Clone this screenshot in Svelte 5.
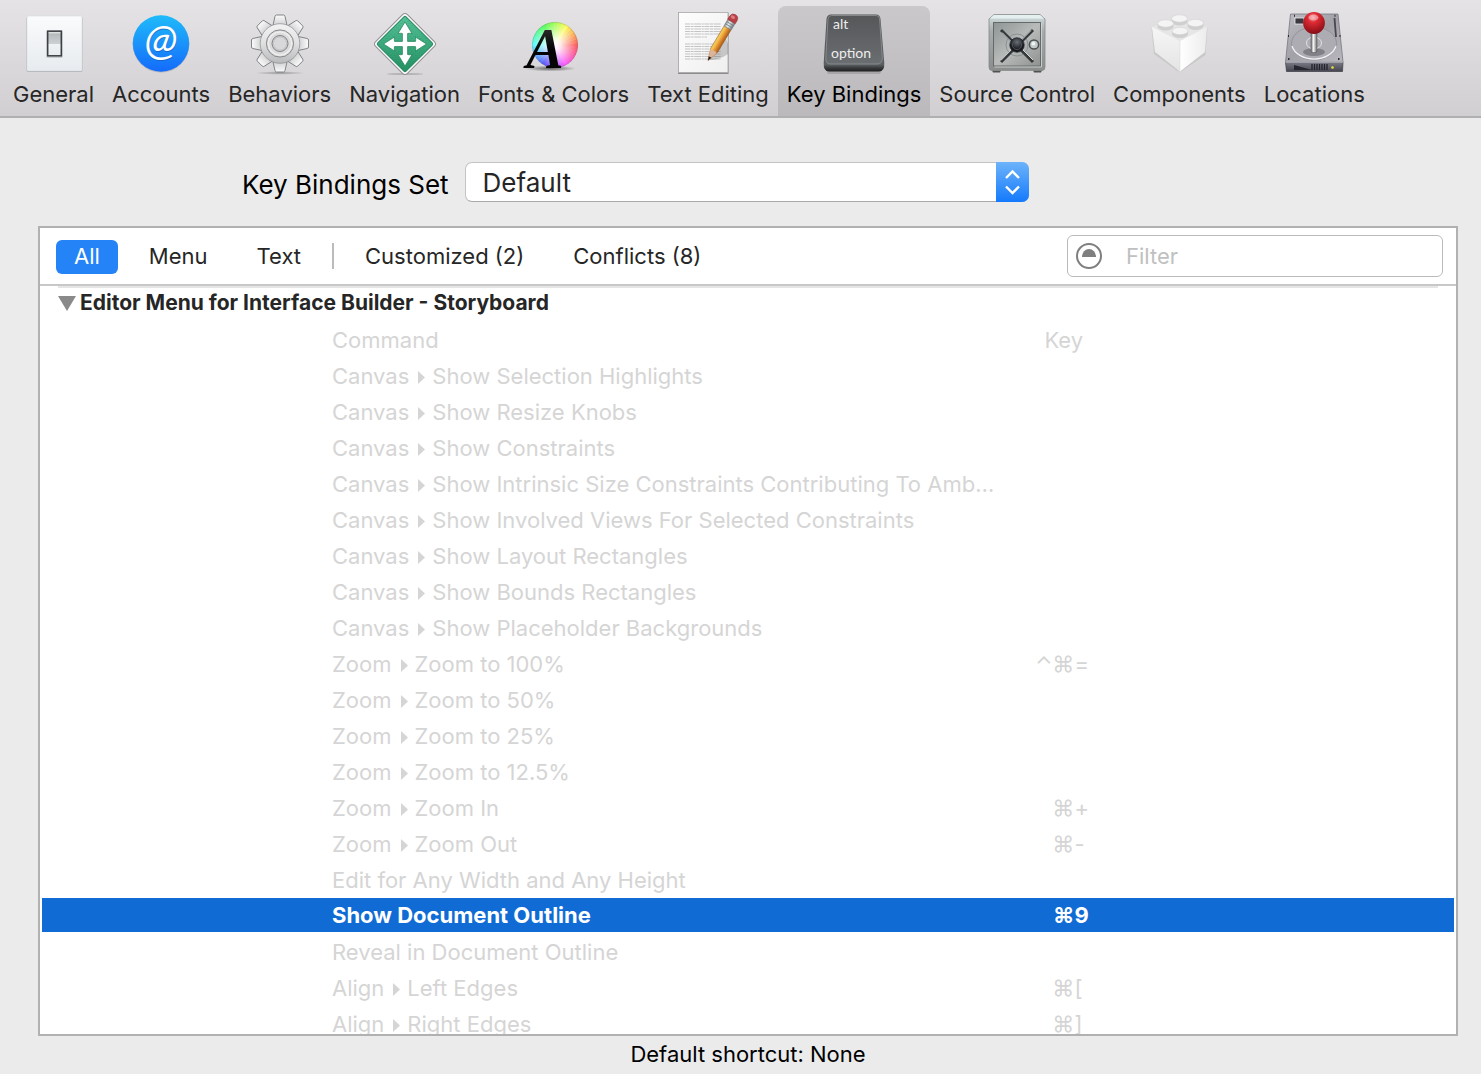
<script lang="ts">
	interface Tab {
		id: string;
		label: string;
	}

	interface Binding {
		path: string[];
		mods?: string;
		key?: string;
	}

	const tabs: Tab[] = [
		{ id: 'general', label: 'General' },
		{ id: 'accounts', label: 'Accounts' },
		{ id: 'behaviors', label: 'Behaviors' },
		{ id: 'navigation', label: 'Navigation' },
		{ id: 'fonts', label: 'Fonts & Colors' },
		{ id: 'text', label: 'Text Editing' },
		{ id: 'keys', label: 'Key Bindings' },
		{ id: 'source', label: 'Source Control' },
		{ id: 'components', label: 'Components' },
		{ id: 'locations', label: 'Locations' }
	];

	const bindings: Binding[] = [
		{ path: ['Canvas', 'Show Selection Highlights'] },
		{ path: ['Canvas', 'Show Resize Knobs'] },
		{ path: ['Canvas', 'Show Constraints'] },
		{ path: ['Canvas', 'Show Intrinsic Size Constraints Contributing To Amb…'] },
		{ path: ['Canvas', 'Show Involved Views For Selected Constraints'] },
		{ path: ['Canvas', 'Show Layout Rectangles'] },
		{ path: ['Canvas', 'Show Bounds Rectangles'] },
		{ path: ['Canvas', 'Show Placeholder Backgrounds'] },
		{ path: ['Zoom', 'Zoom to 100%'], mods: '⌃⌘', key: '=' },
		{ path: ['Zoom', 'Zoom to 50%'] },
		{ path: ['Zoom', 'Zoom to 25%'] },
		{ path: ['Zoom', 'Zoom to 12.5%'] },
		{ path: ['Zoom', 'Zoom In'], mods: '⌘', key: '+' },
		{ path: ['Zoom', 'Zoom Out'], mods: '⌘', key: '-' },
		{ path: ['Edit for Any Width and Any Height'] },
		{ path: ['Show Document Outline'], mods: '⌘', key: '9' },
		{ path: ['Reveal in Document Outline'] },
		{ path: ['Align', 'Left Edges'], mods: '⌘', key: '[' },
		{ path: ['Align', 'Right Edges'], mods: '⌘', key: ']' }
	];

	const filters = ['All', 'Menu', 'Text'];
	const states = ['Customized (2)', 'Conflicts (8)'];

	let activeTab = $state('keys');
	let activeFilter = $state('All');
	let selected = $state(15);
	let open = $state(true);

	// gear teeth, every 45 degrees
	const teeth = [0, 45, 90, 135, 180, 225, 270, 315];

	// colour wheel slices, 10 degrees each, counter-clockwise from red
	const slices = Array.from({ length: 36 }, (_, i) => {
		const a = ((i * 10 - 6) * Math.PI) / 180;
		const b = ((i * 10 + 6) * Math.PI) / 180;
		const pt = (t: number) => `${(33 + 23 * Math.cos(t)).toFixed(2)} ${(35 - 23 * Math.sin(t)).toFixed(2)}`;
		return { d: `M33 35 L${pt(a)} L${pt(b)} Z`, fill: `hsl(${i * 10} 95% 65%)` };
	});

	const lines = [14, 16.5, 19, 21.5, 24, 27, 34, 36.5, 39, 41.5, 44, 46.5, 49];
</script>

<div class="window">
	<nav class="toolbar" aria-label="Preferences">
		{#each tabs as tab (tab.id)}
			<button class="tab" class:active={activeTab === tab.id} onclick={() => (activeTab = tab.id)}>
				<svg viewBox="0 0 64 64" aria-hidden="true">
					{#if tab.id === 'general'}
						<defs>
							<linearGradient id="plate" x2="0" y2="1"><stop stop-color="#fafbfc" /><stop offset="1" stop-color="#e7ebef" /></linearGradient>
							<linearGradient id="rocker" x2="0" y2="1"><stop stop-color="#fafafa" /><stop offset=".12" stop-color="#b8bbbe" /><stop offset=".5" stop-color="#cdd0d3" /><stop offset=".52" stop-color="#f0f3f5" /><stop offset="1" stop-color="#e6eaed" /></linearGradient>
						</defs>
						<rect x="4.5" y="6.5" width="56" height="55.5" rx="2" fill="#a9adb0" />
						<rect x="5" y="6" width="55" height="55" rx="1.5" fill="url(#plate)" stroke="#d9dde0" stroke-width=".6" />
						<rect x="24" y="20" width="17" height="28" rx="2" fill="#9da1a5" opacity=".45" />
						<rect x="25.7" y="21.2" width="13.6" height="24.6" fill="url(#rocker)" stroke="#3c3f43" stroke-width="1.5" />
					{:else if tab.id === 'accounts'}
						<defs>
							<linearGradient id="blue" x2="0" y2="1"><stop stop-color="#1fbbfa" /><stop offset="1" stop-color="#146bfb" /></linearGradient>
						</defs>
						<circle cx="32" cy="34.2" r="28.4" fill="#7a8797" opacity=".4" />
						<circle cx="32" cy="33.5" r="28.2" fill="url(#blue)" />
						<text class="at shade" x="32.5" y="46" text-anchor="middle">@</text>
						<text class="at" x="32" y="45" text-anchor="middle">@</text>
					{:else if tab.id === 'behaviors'}
						<defs>
							<linearGradient id="gear" x2="0" y2="1"><stop stop-color="#f3f3f3" /><stop offset=".5" stop-color="#e0e0e1" /><stop offset="1" stop-color="#b9babc" /></linearGradient>
							<linearGradient id="tooth" x2="0" y2="1"><stop stop-color="#fbfbfb" /><stop offset="1" stop-color="#c9cacc" /></linearGradient>
							<radialGradient id="floor"><stop stop-color="#77787a" stop-opacity=".7" /><stop offset="1" stop-color="#77787a" stop-opacity="0" /></radialGradient>
						</defs>
						<ellipse cx="32" cy="63" rx="25" ry="1.8" fill="url(#floor)" />
						{#each teeth as angle (angle)}
							<path transform="rotate({angle} 32 33.5)" d="M24.6 17 L27 6.4 Q27.3 5 28.5 5 H35.5 Q36.7 5 37 6.4 L39.4 17 Z" fill="url(#tooth)" stroke="#77797d" stroke-width=".9" />
						{/each}
						<circle cx="32" cy="33.5" r="19.8" fill="url(#gear)" stroke="#8b8d90" stroke-width=".7" />
						<circle cx="32" cy="33.5" r="13.6" fill="#dcdcdd" stroke="#85878b" stroke-width="1" />
						<circle cx="32" cy="33.5" r="11.5" fill="none" stroke="#eeeeee" stroke-width="1.4" />
						<circle cx="32" cy="33.5" r="8" fill="#d2d1d3" stroke="#808286" stroke-width="1" />
						<circle cx="32" cy="33.5" r="6.6" fill="#d8d7d9" stroke="#b3b4b7" stroke-width=".6" />
					{:else if tab.id === 'navigation'}
						<defs>
							<linearGradient id="green" x2="1" y2="1"><stop stop-color="#57c39a" /><stop offset="1" stop-color="#239163" /></linearGradient>
							<pattern id="grain" width="3" height="3" patternUnits="userSpaceOnUse"><path d="M0 0h1v1h-1zM2 1h1v1h-1z" fill="#16764c" opacity=".25" /></pattern>
						</defs>
						<ellipse cx="32" cy="64" rx="18" ry="1" fill="#8d8d8f" opacity=".5" />
						<rect x="9.5" y="11.500" width="45" height="45" rx="3.5" transform="rotate(45 32 34)" fill="#fcfcfc" stroke="#8e8e90" stroke-width="1" />
						<rect x="12" y="14" width="40" height="40" rx="1.5" transform="rotate(45 32 34)" fill="url(#green)" stroke="#258a60" stroke-width="1" />
						<rect x="13" y="15" width="38" height="38" transform="rotate(45 32 34)" fill="url(#grain)" />
						<path d="M32 12 L39 23.5 Q36.5 23 34.6 23.5 V31.4 H42.5 Q43 29.5 42.5 27 L53.5 34 L42.5 41 Q43 38.5 42.5 36.6 H34.6 V44.5 Q36.5 45 39 44.5 L32 56 L25 44.5 Q27.5 45 29.4 44.5 V36.6 H21.5 Q21 38.5 21.5 41 L10.5 34 L21.5 27 Q21 29.5 21.5 31.4 H29.4 V23.5 Q27.5 23 25 23.5 Z" fill="#fff" stroke="#1e8054" stroke-width=".7" />
					{:else if tab.id === 'fonts'}
						<defs>
							<radialGradient id="white"><stop stop-color="#fff" /><stop offset=".25" stop-color="#fff" stop-opacity=".85" /><stop offset="1" stop-color="#fff" stop-opacity="0" /></radialGradient>
							<radialGradient id="under"><stop stop-color="#333" stop-opacity=".7" /><stop offset="1" stop-color="#333" stop-opacity="0" /></radialGradient>
							<linearGradient id="ink" x2="0" y2="1"><stop stop-color="#3c3c3c" /><stop offset=".5" stop-color="#050505" /></linearGradient>
						</defs>
						<ellipse cx="28" cy="58.5" rx="26" ry="3" fill="url(#under)" />
						{#each slices as slice (slice.d)}
							<path d={slice.d} fill={slice.fill} />
						{/each}
						<circle cx="33" cy="35" r="23" fill="url(#white)" />
						<circle cx="33" cy="35" r="22.6" fill="none" stroke="#777" stroke-opacity=".35" stroke-width=".8" />
						<text class="letter" x="23" y="58" text-anchor="middle" fill="url(#ink)">A</text>
					{:else if tab.id === 'text'}
						<defs>
							<linearGradient id="paper" x2="1" y2="1"><stop stop-color="#fdfdfd" /><stop offset="1" stop-color="#efefef" /></linearGradient>
							<linearGradient id="wood"><stop stop-color="#f7d56a" /><stop offset=".35" stop-color="#f0b344" /><stop offset=".6" stop-color="#e08a2c" /><stop offset="1" stop-color="#a6591c" /></linearGradient>
							<linearGradient id="metal"><stop stop-color="#8f9ba0" /><stop offset=".4" stop-color="#e4eaec" /><stop offset="1" stop-color="#6f797d" /></linearGradient>
						</defs>
						<rect x="2" y="3" width="50.5" height="61" fill="#8c8c8c" />
						<rect x="2.4" y="2.5" width="49.6" height="60" fill="url(#paper)" stroke="#a8a8a8" stroke-width=".8" />
						{#each lines as y (y)}
							<path d="M9 {y} H{y === 27 ? 31 : 45}" stroke="#c4c4c4" stroke-width="1.2" stroke-dasharray="5 .6 3 .6 7 .6 2 .6" />
						{/each}
						<path d="M32 50 L50 28 L52 34 L52 44 Q44 50 32 50 Z" fill="#555" opacity=".28" />
						<g transform="translate(32 50.5) rotate(31)">
							<path d="M0 0 L-4 -12 V-38 H4 V-12 Z" fill="url(#wood)" stroke="#8d541d" stroke-width=".5" />
							<path d="M0 0 L-4 -12 Q-2.3 -10 -1.2 -12 Q0 -10 1.5 -12 Q3 -10 4 -12 Z" fill="#ddb39a" />
							<path d="M0 0 L-1.5 -4 H1.5 Z" fill="#1d1d1d" />
							<rect x="-4.2" y="-45.5" width="8.4" height="7.5" fill="url(#metal)" stroke="#757f83" stroke-width=".5" />
							<path d="M-4.2 -43 H4.2 M-4.2 -40.5 H4.2" stroke="#6e787c" stroke-width=".7" />
							<path d="M-4.4 -45.5 V-49 Q-4 -53.5 0 -53.5 Q4 -53.5 4.4 -49 V-45.5 Z" fill="#b93f45" stroke="#8d2e33" stroke-width=".5" />
							<ellipse cx="-1" cy="-50" rx="2.3" ry="1.6" fill="#df7a7c" />
						</g>
					{:else if tab.id === 'keys'}
						<defs>
							<linearGradient id="cap" x2="0" y2="1"><stop stop-color="#555759" /><stop offset="1" stop-color="#6b6e71" /></linearGradient>
							<linearGradient id="side" x2="0" y2="1"><stop stop-color="#55585a" /><stop offset=".88" stop-color="#5d6062" /><stop offset=".94" stop-color="#36383a" /><stop offset="1" stop-color="#1e1f20" /></linearGradient>
						</defs>
						<path d="M4 60 H60 L58 64 H6 Z" fill="#777" opacity=".35" />
						<path d="M9 4.5 H54 Q58 4.5 58.5 9 L62.3 53 Q62.7 61.5 57 61.5 H7 Q1.3 61.5 1.7 53 L4.500 9 Q5 4.5 9 4.5 Z" fill="url(#side)" />
						<path d="M9.5 5.5 H54 Q57.3 5.5 57.6 9 L60.3 48 Q60.5 54 55 54 H8 Q3.5 54 3.8 48 L6 9 Q6.4 5.5 9.5 5.5 Z" fill="url(#cap)" stroke="#898c8f" stroke-width=".9" />
						<text class="cap" x="11" y="19">alt</text>
						<text class="cap" x="9" y="48">option</text>
					{:else if tab.id === 'source'}
						<defs>
							<linearGradient id="safe" x2="0" y2="1"><stop stop-color="#d5e1e1" /><stop offset=".3" stop-color="#a7acac" /><stop offset="1" stop-color="#8b8d8c" /></linearGradient>
							<linearGradient id="door" x2="1" y2="1"><stop stop-color="#8d9594" /><stop offset=".5" stop-color="#b8bbba" /><stop offset="1" stop-color="#8f9190" /></linearGradient>
							<radialGradient id="hub" cy=".3"><stop stop-color="#6b7078" /><stop offset="1" stop-color="#17191d" /></radialGradient>
						</defs>
						<path d="M6 58 H17 L15 62.5 H8 Z M47 58 H58 L56 62.5 H49 Z" fill="#4f5252" />
						<path d="M9 4.5 H55 L60 9 V57 Q60 60.5 57 60.5 H7 Q4 60.5 4 57 V9 Z" fill="url(#safe)" stroke="#868c8b" stroke-width=".8" />
						<path d="M9 5 H55 L59 8.5 H5 Z" fill="#e4f0f0" />
						<rect x="8.5" y="12.5" width="47" height="43.5" fill="url(#door)" stroke="#646a69" stroke-width="1" />
						<path d="M9.5 57 H56.5 V13" fill="none" stroke="#d3d9d8" stroke-width=".8" />
						<circle cx="32" cy="35" r="11" fill="none" stroke="#8a9294" stroke-width="1" />
						<path d="M16 20 L48 52 M48 20 L16 52" stroke="#34383a" stroke-width="3" />
						<path d="M17 22.5 L30 35.5 M46 20.5 L34 32.5 M29 37 L15.8 50.5 M35 37 L48 50" stroke="#cfd6d8" stroke-width="1" />
						<circle cx="32" cy="35" r="7.2" fill="url(#hub)" stroke="#202327" stroke-width=".8" />
						<circle cx="32" cy="35" r="4.6" fill="none" stroke="#565b63" stroke-width=".8" />
						<circle cx="49" cy="34.5" r="4.6" fill="#c3caca" stroke="#4b5151" stroke-width="1.5" />
						<circle cx="48.4" cy="33.7" r="1.9" fill="#eef3f3" />
					{:else if tab.id === 'components'}
						<defs>
							<linearGradient id="left" x2="0" y2="1"><stop stop-color="#f6f6f6" /><stop offset="1" stop-color="#e4e4e4" /></linearGradient>
							<linearGradient id="right"><stop stop-color="#fff" /><stop offset="1" stop-color="#ececec" /></linearGradient>
						</defs>
						<path d="M4.500 18 L32.5 63 L60.500 18 L58.500 45 L32.5 62.5 L7 44 Z" fill="#aaa" opacity=".35" />
						<path d="M5 17 L33 5 L60 17 L33 31 Z" fill="#e6e6e6" />
						<path d="M5 17 L33 31 V61.5 L8 42 Z" fill="url(#left)" />
						<path d="M60 17 L33 31 V61.5 L58 42 Z" fill="url(#right)" />
						<path d="M33 31 V61" stroke="#dcdcdc" stroke-width=".6" />
						{#each [[32.5, 8.5], [18.5, 13.5], [48.5, 13], [33, 21]] as [x, y] (x)}
							<path d="M{x - 8} {y} V{y + 3} A8 4 0 0 0 {x + 8} {y + 3} V{y} Z" fill="#cfcfcf" />
							<ellipse cx={x} cy={y} rx="8" ry="3.7" fill="#f4f4f4" stroke="#d2d2d2" stroke-width=".6" />
						{/each}
					{:else}
						<defs>
							<linearGradient id="drive" x2="1" y2="1"><stop stop-color="#bdbcc2" /><stop offset=".5" stop-color="#a2a1a8" /><stop offset="1" stop-color="#b9b8be" /></linearGradient>
							<linearGradient id="front" x2="0" y2="1"><stop stop-color="#7c7c88" /><stop offset="1" stop-color="#45454f" /></linearGradient>
							<linearGradient id="stick"><stop stop-color="#6b6b6b" /><stop offset=".4" stop-color="#f6f6f6" /><stop offset="1" stop-color="#6e6e6e" /></linearGradient>
							<radialGradient id="ball" cx=".45" cy=".25" r=".8"><stop stop-color="#f6898c" /><stop offset=".3" stop-color="#dd2a33" /><stop offset="1" stop-color="#7d0a12" /></radialGradient>
						</defs>
						<path d="M8.5 4 H56 L61 52 H3.5 Z" fill="url(#drive)" stroke="#77767e" stroke-width=".8" />
						<path d="M3.5 52 H61 L60.5 61.5 H4.5 Z" fill="url(#front)" stroke="#3b3b43" stroke-width=".7" />
						<path d="M3.5 52 H61" stroke="#dcdbe2" stroke-width="1" />
						<path d="M12 55 L30 60 H12 Z" fill="#262630" />
						<path d="M30 54 V60 M32.5 54 V60 M35 54 V60 M37.5 54 V60 M40 54 V60 M42.5 54 V60 M45 54 V60" stroke="#22222a" stroke-width="1.3" />
						<circle cx="50.5" cy="57.5" r="1.3" fill="#e9e13f" />
						<ellipse cx="32" cy="33.5" rx="22.5" ry="16.5" fill="#adacb3" stroke="#84838a" stroke-width=".6" />
						<path d="M10 36 A22.5 16.5 0 0 0 54 36" fill="none" stroke="#f1f1f5" stroke-width="1.3" />
						<ellipse cx="32" cy="42" rx="11" ry="4" fill="#55545a" opacity=".5" />
						<ellipse cx="32" cy="33" rx="7.5" ry="6" fill="none" stroke="#e3e3e8" stroke-width="1" />
						<rect x="13" y="8" width="9" height="6" fill="#3a3940" stroke="#ececf0" stroke-width=".8" />
						<path d="M52.5 8 L54 27" stroke="#47464d" stroke-width="1.8" />
						<path d="M12 5.7h1M52.5 5.7h1M6 26h1M57.5 26h1M6 49h1.5M56 49h1.5" stroke="#2e2d33" stroke-width="2" />
						<rect x="29" y="21" width="6" height="21.5" rx="2" fill="url(#stick)" stroke="#4e4e52" stroke-width=".5" />
						<circle cx="32" cy="13" r="10.9" fill="url(#ball)" />
						<ellipse cx="31.5" cy="7.5" rx="5" ry="3" fill="#fff" opacity=".4" />
					{/if}
				</svg>
				<span>{tab.label}</span>
			</button>
		{/each}
	</nav>

	<main>
		<div class="set-row">
			<label for="binding-set">Key Bindings Set</label>
			<div class="popup">
				<select id="binding-set">
					<option>Default</option>
				</select>
				<span class="stepper">
					<svg viewBox="0 0 33 40" aria-hidden="true">
						<path d="M10 16 L16.5 9.5 L23 16 M10 24.5 L16.5 31 L23 24.5" fill="none" stroke="#fff" stroke-width="2.4" />
					</svg>
				</span>
			</div>
		</div>

		<section class="panel">
			<div class="filter-bar">
				{#each filters as name (name)}
					<button class="scope" class:active={activeFilter === name} onclick={() => (activeFilter = name)}>{name}</button>
				{/each}
				<span class="divider"></span>
				{#each states as name (name)}
					<button class="scope" class:active={activeFilter === name} onclick={() => (activeFilter = name)}>{name}</button>
				{/each}
				<label class="search">
					<svg viewBox="0 0 26 26" aria-hidden="true">
						<circle cx="13" cy="13" r="12" fill="none" stroke="#7f7f7f" stroke-width="2" />
						<path d="M6 14 A7 8 0 0 1 20 14 Z" fill="#7f7f7f" />
					</svg>
					<input type="text" placeholder="Filter" aria-label="Filter" />
				</label>
			</div>

			<div class="list">
				<button class="group" aria-expanded={open} onclick={() => (open = !open)}>
					<svg class="disclosure" class:closed={!open} viewBox="0 0 18 15" aria-hidden="true">
						<path d="M0 0 H18 L9 15 Z" fill="#8a8a8a" />
					</svg>
					Editor Menu for Interface Builder - Storyboard
				</button>
				{#if open}
					<table>
						<thead>
							<tr>
								<th class="command" scope="col">Command</th>
								<th class="key" scope="col">Key</th>
							</tr>
						</thead>
						<tbody>
							{#each bindings as binding, i (i)}
								<tr class:selected={selected === i} onclick={() => (selected = i)}>
									<td class="command">
										{#each binding.path as part, n (n)}
											{#if n > 0}
												<svg class="arrow" viewBox="0 0 7 13" aria-hidden="true"><path d="M0 0 L7 6.5 L0 13 Z" fill="currentColor" /></svg>
											{/if}{part}
										{/each}
									</td>
									<td class="key">
										{#if binding.key}
											<span class="mods">{binding.mods}</span><span>{binding.key}</span>
										{/if}
									</td>
								</tr>
							{/each}
						</tbody>
					</table>
				{/if}
			</div>
		</section>
	</main>

	<footer>Default shortcut: None</footer>
</div>

<style>
	:global(body) {
		background: #ebebeb;
	}

	.window {
		display: flex;
		flex-direction: column;
		height: 100vh;
		font-family: Inter, 'Liberation Sans', sans-serif;
		font-size: 22px;
		line-height: 28px;
		color: #262626;
	}

	button,
	select,
	input {
		font: inherit;
		color: inherit;
	}

	button {
		border: 0;
		background: none;
	}

	.toolbar {
		display: flex;
		flex: none;
		padding: 6px 4px 0;
		background: linear-gradient(#e5e3e5, #d1cfd1);
		border-bottom: 2px solid #b0afb1;
	}

	.tab {
		display: flex;
		flex-direction: column;
		align-items: center;
		gap: 6px;
		padding: 4px 9px 8px;
		border-radius: 8px 8px 0 0;
		white-space: nowrap;
	}

	.tab.active {
		background: linear-gradient(#cac8ca, #bbb9bb);
		color: #000;
	}

	.tab svg {
		width: 64px;
		height: 64px;
		overflow: visible;
	}

	.at {
		font: italic 43px Lato, sans-serif;
		fill: #fff;
	}

	.at.shade {
		fill: #1c4f9c;
		opacity: 0.5;
	}

	.letter {
		font: italic bold 56px 'Liberation Serif', serif;
	}

	.cap {
		font: 14px Lato, sans-serif;
		fill: #eee;
	}

	main {
		display: flex;
		flex: 1;
		flex-direction: column;
		min-height: 0;
		padding: 44px 23px 0 38px;
	}

	.set-row {
		display: flex;
		align-items: center;
		gap: 16px;
		margin: 0 16% 24px 204px;
		font-size: 26px;
		color: #000;
	}

	.set-row label {
		padding-top: 6px;
		white-space: nowrap;
	}

	.popup {
		position: relative;
		width: 564px;
	}

	select {
		width: 100%;
		height: 40px;
		padding: 2px 48px 0 17px;
		appearance: none;
		background: #fff;
		border: 1px solid #c3c3c3;
		border-bottom-color: #a9a9a9;
		border-radius: 7px;
		color: #262626;
	}

	.stepper {
		position: absolute;
		top: 0;
		right: 0;
		width: 33px;
		height: 40px;
		background: linear-gradient(#6cb3fa, #147afc);
		border-radius: 0 7px 7px 0;
		pointer-events: none;
	}

	.stepper svg {
		display: block;
	}

	.panel {
		display: flex;
		flex: 1;
		flex-direction: column;
		min-height: 0;
		background: #fff;
		border: 2px solid #b1b1b1;
	}

	.filter-bar {
		display: flex;
		flex: none;
		align-items: center;
		gap: 13px;
		height: 56px;
		padding: 0 13px 0 16px;
		border-bottom: 2px solid #c8c8c8;
	}

	.scope {
		height: 34px;
		margin-top: 2px;
		padding: 0 18px 2px;
		border-radius: 6px;
		white-space: nowrap;
	}

	.scope.active {
		background: #2383f7;
		color: #fff;
	}

	.divider {
		width: 2px;
		height: 26px;
		background: #bbb;
	}

	.search {
		display: flex;
		align-items: center;
		gap: 24px;
		box-sizing: border-box;
		width: 376px;
		height: 42px;
		margin-left: auto;
		padding: 0 8px;
		border: 1px solid #bbb;
		border-radius: 6px;
	}

	.search svg {
		flex: none;
		width: 26px;
		height: 26px;
	}

	.search input {
		flex: 1;
		min-width: 0;
		padding: 0;
		border: 0;
		outline: 0;
		background: none;
	}

	.search input::placeholder {
		color: #c0c0c0;
	}

	.list {
		flex: 1;
		min-height: 0;
		overflow: hidden;
		padding: 0 2px;
	}

	.group {
		display: flex;
		align-items: center;
		gap: 4px;
		width: calc(100% - 32px);
		height: 36px;
		margin: 0 16px;
		padding: 0 0 4px;
		border-top: 2px solid #e5e5e5;
		font-size: 21px;
		font-weight: 700;
		text-align: left;
	}

	.disclosure {
		width: 18px;
		height: 15px;
	}

	.disclosure.closed {
		transform: rotate(-90deg);
	}

	table {
		width: 100%;
		table-layout: fixed;
		border-collapse: separate;
		border-spacing: 0;
		color: #d5d5d5;
	}

	th,
	td {
		box-sizing: border-box;
		height: 36px;
		padding: 0;
		font-weight: 400;
		text-align: left;
		white-space: nowrap;
	}

	.command {
		width: 70%;
		padding-left: 290px;
	}

	th.key {
		padding-left: 14px;
	}

	.mods {
		display: inline-block;
		width: 44px;
		text-align: right;
	}

	.arrow {
		width: 7px;
		height: 13px;
		margin: 0 7px 0 9px;
	}

	.selected td {
		background: #116bd5;
		border-bottom: 2px solid #fff;
		color: #fff;
		font-weight: 700;
	}

	footer {
		flex: none;
		padding: 4px 23px 6px 38px;
		text-align: center;
		color: #000;
	}
</style>
